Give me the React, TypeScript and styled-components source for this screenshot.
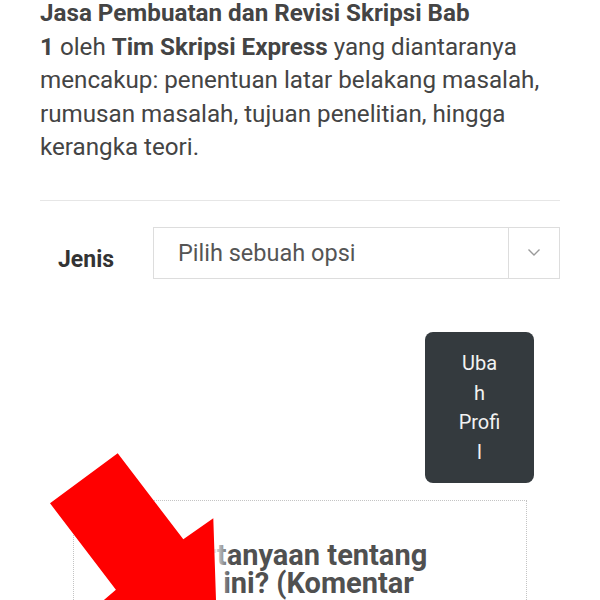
import React from 'react'
import styled, { createGlobalStyle } from 'styled-components';

const GlobalStyle = createGlobalStyle`
    html, body {
        margin: 0;
        padding: 0;
        background: #ffffff;
        font-family: Roboto, "Noto Sans", "Liberation Sans", sans-serif;
        overflow: hidden;
    }
`;

const Page = styled.div`
    position: relative;
    width: 600px;
    height: 600px;
    overflow: hidden;
    padding: 0 40px;
    box-sizing: border-box;
`;

const Description = styled.p`
    margin: -3px 0 0;
    font-size: 24.2px;
    line-height: 33.6px;
    color: #444444;
    strong{
        font-weight: 700;
    }
`;

const Divider = styled.hr`
    margin: 35px 0 0;
    border: none;
    border-top: 1px solid #e6e6e6;
`;

const VariantRow = styled.div`
    display: flex;
    align-items: center;
    margin-top: 26px;
`;

const VariantLabel = styled.label`
    width: 113px;
    padding-left: 18px;
    padding-top: 14px;
    box-sizing: border-box;
    font-size: 23px;
    font-weight: 700;
    color: #333333;
`;

const SelectBox = styled.div`
    flex: 1;
    display: flex;
    height: 52px;
    border: 1px solid #dddddd;
    box-sizing: border-box;
`;

const SelectValue = styled.div`
    flex: 1;
    display: flex;
    align-items: center;
    padding-left: 24px;
    font-size: 23.5px;
    color: #555555;
`;

const SelectArrow = styled.div`
    width: 50px;
    border-left: 1px solid #dddddd;
    display: flex;
    align-items: center;
    justify-content: center;
`;

const ActionRow = styled.div`
    display: flex;
    justify-content: flex-end;
    margin-top: 53px;
    padding-right: 26px;
`;

const ProfileButton = styled.button`
    width: 109px;
    height: 151px;
    padding: 16px 32px 14px;
    box-sizing: border-box;
    border: none;
    border-radius: 8px;
    background: #343a3e;
    color: #f2f2f2;
    font-family: Roboto, "Noto Sans", sans-serif;
    font-size: 20px;
    line-height: 29.5px;
    text-align: center;
    overflow-wrap: anywhere;
`;

const QuestionBox = styled.div`
    margin: 17px 33px 0;
    border: 1px dotted #c4c4c4;
    padding: 40px 50px 40px 41px;
`;

const QuestionTitle = styled.h3`
    margin: 0;
    font-size: 29px;
    line-height: 28px;
    font-weight: 700;
    color: #505050;
`;

const ArrowOverlay = styled.svg`
    position: absolute;
    left: 0;
    top: 0;
    width: 600px;
    height: 600px;
    pointer-events: none;
`;

const App = (): JSX.Element => {
    return (
        <Page>
            <GlobalStyle />
            <Description>
                <strong>Jasa Pembuatan dan Revisi Skripsi Bab</strong><br />
                <strong>1</strong> oleh <strong>Tim Skripsi Express</strong> yang diantaranya mencakup: penentuan latar belakang masalah, rumusan masalah, tujuan penelitian, hingga kerangka teori.
            </Description>

            <Divider />

            <VariantRow>
                <VariantLabel>Jenis</VariantLabel>
                <SelectBox>
                    <SelectValue>Pilih sebuah opsi</SelectValue>
                    <SelectArrow>
                        <svg width="14" height="9" viewBox="0 0 14 9">
                            <path d="M1.5 1.5 L7 7 L12.5 1.5" fill="none" stroke="#9a9a9a" strokeWidth="1.4" />
                        </svg>
                    </SelectArrow>
                </SelectBox>
            </VariantRow>

            <ActionRow>
                <ProfileButton type="button">Ubah Profil</ProfileButton>
            </ActionRow>

            <QuestionBox>
                <QuestionTitle>Ada pertanyaan tentang layanan ini? (Komentar Disini)</QuestionTitle>
            </QuestionBox>

            <ArrowOverlay viewBox="0 0 600 600">
                <defs>
                    <linearGradient id="fade" x1="0" x2="1" y1="0" y2="0">
                        <stop offset="0" stopColor="#ffffff" stopOpacity="0.9" />
                        <stop offset="1" stopColor="#ffffff" stopOpacity="0" />
                    </linearGradient>
                </defs>
                <rect x="214" y="530" width="17" height="70" fill="url(#fade)" />
                <polygon
                    points="117.7,453.3 183.3,539.3 213.3,518.3 217.8,653.9 88.1,613.6 115.9,589.7 50,503.3"
                    fill="#ff0000"
                />
            </ArrowOverlay>
        </Page>
    );
};

export default App;
